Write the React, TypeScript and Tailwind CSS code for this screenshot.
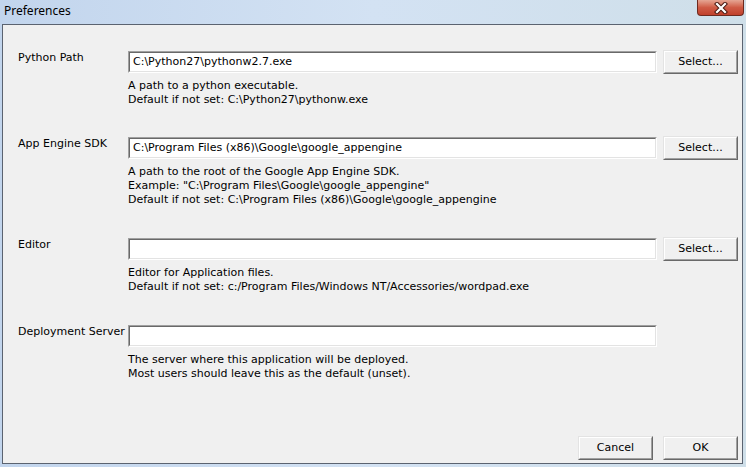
import React from 'react';

const font = { fontFamily: '"DejaVu Sans", Verdana, sans-serif' };

function Button({ label, className = '' }: { label: string; className?: string }) {
    return (
        <div className={`w-[75px] h-[24px] border-t border-l border-t-[#e3e3e3] border-l-[#e3e3e3] border-b border-r border-b-[#696969] border-r-[#696969] ${className}`}>
            <div className="w-full h-full border-t border-l border-t-white border-l-white border-b border-r border-b-[#a0a0a0] border-r-[#a0a0a0] bg-[#f0f0f0] flex items-center justify-center text-[11px] text-black">
                {label}
            </div>
        </div>
    );
}

function Field({ value }: { value: string }) {
    return (
        <div className="w-[529px] h-[22px] border-t border-l border-t-[#a0a0a0] border-l-[#a0a0a0] border-b border-r border-b-white border-r-white">
            <div className="w-full h-full border-t border-l border-t-[#696969] border-l-[#696969] border-b border-r border-b-[#e3e3e3] border-r-[#e3e3e3] bg-white flex items-center pl-[3px] text-[11px] text-black whitespace-nowrap overflow-hidden">
                {value}
            </div>
        </div>
    );
}

interface RowProps {
    label: string;
    value: string;
    lines: string[];
    select?: boolean;
    className?: string;
}

function Row({ label, value, lines, select = true, className = '' }: RowProps) {
    return (
        <div className={`flex items-start ${className}`}>
            <div className="w-[110px] pt-[1px] leading-[14px] text-[11px] text-black whitespace-nowrap">{label}</div>
            <div className="flex flex-col">
                <div className="flex items-center h-[24px] gap-[6px]">
                    <Field value={value} />
                    {select && <Button label="Select..." />}
                </div>
                <div className="mt-[5px] text-[11px] leading-[14px] text-black whitespace-nowrap">
                    {lines.map((l) => (
                        <div key={l}>{l}</div>
                    ))}
                </div>
            </div>
        </div>
    );
}

export default function App() {
    return (
        <div className="w-[746px] h-[467px] overflow-hidden flex flex-col bg-linear-to-r from-[#c2d5ed] via-[#d3e2f3] to-[#cfdfe9]" style={font}>
            {/* Title bar */}
            <div className="h-[24px] flex items-start shrink-0">
                <span className="pl-[4px] pt-[3px] text-[12px] leading-[16px] text-black" style={{ fontFamily: '"Noto Sans", "Open Sans", sans-serif' }}>
                    Preferences
                </span>
                <div className="ml-auto mr-[2px] w-[47px] h-[16px] rounded-b-[4px] border border-t-0 border-[#6e2a1f] bg-linear-to-b from-[#e5a593] via-[#cf5b45] to-[#c0402c] flex items-center justify-center">
                    <svg width="14" height="12" viewBox="0 0 14 12">
                        <path d="M3 2 L11 10 M11 2 L3 10" stroke="#4a1a12" strokeWidth="4.2" strokeLinecap="square" />
                        <path d="M3 2 L11 10 M11 2 L3 10" stroke="#ffffff" strokeWidth="2.2" strokeLinecap="square" />
                    </svg>
                </div>
            </div>

            {/* Client area */}
            <div className="ml-[2px] w-[741px] h-[440px] border border-[#5b6370] bg-[#f0f0f0] flex flex-col pl-[15px] pr-[3px] pt-[25px] pb-[3px]">
                <Row
                    label="Python Path"
                    value="C:\Python27\pythonw2.7.exe"
                    lines={['A path to a python executable.', 'Default if not set: C:\\Python27\\pythonw.exe']}
                />
                <Row
                    className="mt-[29px]"
                    label="App Engine SDK"
                    value="C:\Program Files (x86)\Google\google_appengine"
                    lines={[
                        'A path to the root of the Google App Engine SDK.',
                        'Example: "C:\\Program Files\\Google\\google_appengine"',
                        'Default if not set: C:\\Program Files (x86)\\Google\\google_appengine',
                    ]}
                />
                <Row
                    className="mt-[30px]"
                    label="Editor"
                    value=""
                    lines={['Editor for Application files.', 'Default if not set: c:/Program Files/Windows NT/Accessories/wordpad.exe']}
                />
                <Row
                    className="mt-[30px]"
                    label="Deployment Server"
                    value=""
                    select={false}
                    lines={['The server where this application will be deployed.', 'Most users should leave this as the default (unset).']}
                />
                <div className="mt-auto flex justify-end gap-[10px] pr-[1px]">
                    <Button label="Cancel" />
                    <Button label="OK" />
                </div>
            </div>
        </div>
    );
}
